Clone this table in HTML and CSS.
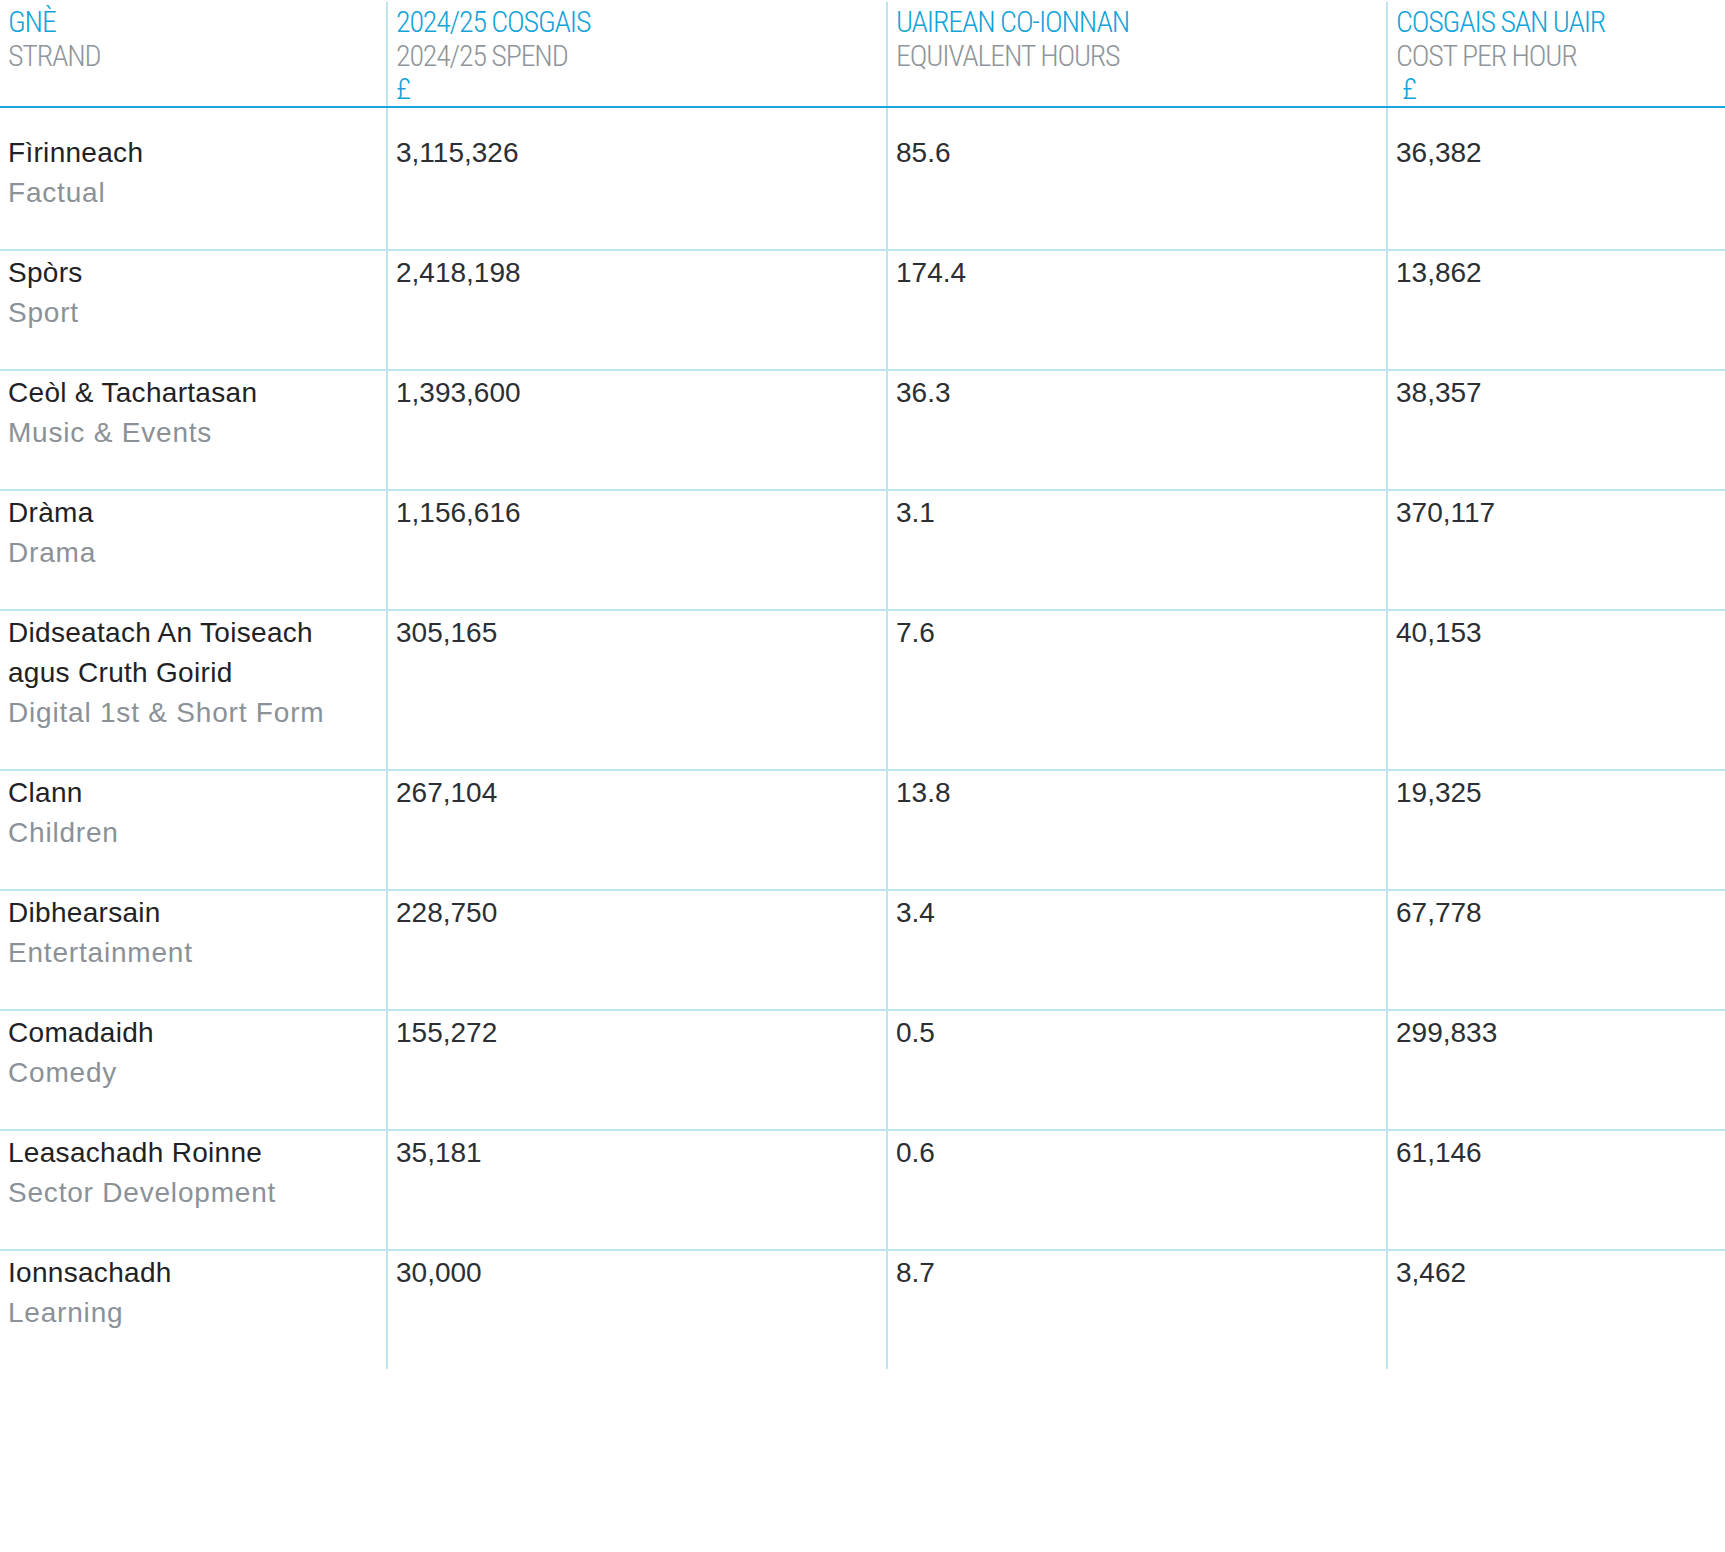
FILE: index.html
```html
<!DOCTYPE html>
<html lang="gd">
<head>
<meta charset="utf-8">
<title>Gnè – Cosgais</title>
<link rel="stylesheet" href="styles.css">
</head>
<body>
<table class="spend">
  <colgroup>
    <col class="c-strand">
    <col class="c-num">
    <col class="c-num">
    <col>
  </colgroup>
  <thead>
    <tr>
      <th><span class="gd">GNÈ</span><span class="en">STRAND</span></th>
      <th><span class="gd">2024/25 COSGAIS</span><span class="en">2024/25 SPEND</span><span class="gd">£</span></th>
      <th><span class="gd">UAIREAN CO-IONNAN</span><span class="en">EQUIVALENT HOURS</span></th>
      <th><span class="gd">COSGAIS SAN UAIR</span><span class="en">COST PER HOUR</span><span class="gd unit">£</span></th>
    </tr>
  </thead>
  <tbody>
    <tr>
      <td><span class="name">Fìrinneach</span><span class="eng">Factual</span></td>
      <td>3,115,326</td><td>85.6</td><td>36,382</td>
    </tr>
    <tr>
      <td><span class="name">Spòrs</span><span class="eng">Sport</span></td>
      <td>2,418,198</td><td>174.4</td><td>13,862</td>
    </tr>
    <tr>
      <td><span class="name">Ceòl &amp; Tachartasan</span><span class="eng">Music &amp; Events</span></td>
      <td>1,393,600</td><td>36.3</td><td>38,357</td>
    </tr>
    <tr>
      <td><span class="name">Dràma</span><span class="eng">Drama</span></td>
      <td>1,156,616</td><td>3.1</td><td>370,117</td>
    </tr>
    <tr>
      <td><span class="name">Didseatach An Toiseach agus Cruth Goirid</span><span class="eng">Digital 1st &amp; Short Form</span></td>
      <td>305,165</td><td>7.6</td><td>40,153</td>
    </tr>
    <tr>
      <td><span class="name">Clann</span><span class="eng">Children</span></td>
      <td>267,104</td><td>13.8</td><td>19,325</td>
    </tr>
    <tr>
      <td><span class="name">Dibhearsain</span><span class="eng">Entertainment</span></td>
      <td>228,750</td><td>3.4</td><td>67,778</td>
    </tr>
    <tr>
      <td><span class="name">Comadaidh</span><span class="eng">Comedy</span></td>
      <td>155,272</td><td>0.5</td><td>299,833</td>
    </tr>
    <tr>
      <td><span class="name">Leasachadh Roinne</span><span class="eng">Sector Development</span></td>
      <td>35,181</td><td>0.6</td><td>61,146</td>
    </tr>
    <tr>
      <td><span class="name">Ionnsachadh</span><span class="eng">Learning</span></td>
      <td>30,000</td><td>8.7</td><td>3,462</td>
    </tr>
  </tbody>
</table>
</body>
</html>
```

FILE: styles.css
```css
html, body {
  margin: 0;
  padding: 0;
  background: #ffffff;
}

body {
  font-family: "Liberation Sans", Arial, sans-serif;
  color: #24272b;
}

.spend {
  width: 100%;
  table-layout: fixed;
  border-collapse: collapse;
  margin-top: 2px;
}

.c-strand { width: 387px; }
.c-num { width: 500px; }

.spend th,
.spend td {
  text-align: left;
  vertical-align: top;
  padding: 0 8px;
}

.spend th + th,
.spend td + td {
  border-left: 2px solid #bfe4f1;
}

.spend thead th {
  font-family: "Roboto", sans-serif;
  font-stretch: 75%;
  font-weight: 300;
  font-size: 30px;
  line-height: 33.5px;
  padding-top: 3px;
  padding-bottom: 0;
  border-bottom: 2px solid #1aa6da;
  letter-spacing: -1.2px;
}

.spend thead th span {
  display: block;
}

.gd { color: #12a3d9; }
.en { color: #8f959a; }
.unit { padding-left: 6px; }

.spend tbody td {
  font-size: 28px;
  line-height: 40px;
  padding-top: 2px;
  padding-bottom: 36px;
  border-bottom: 2px solid #bfe4f1;
  color: #2b2f33;
}

.spend tbody tr:first-child td {
  padding-top: 25px;
}

.spend tbody tr:last-child td {
  border-bottom: 0;
}

.name {
  display: block;
  color: #1f2225;
  letter-spacing: 0.3px;
}

.eng {
  display: block;
  color: #8b9196;
  letter-spacing: 0.8px;
}
```
